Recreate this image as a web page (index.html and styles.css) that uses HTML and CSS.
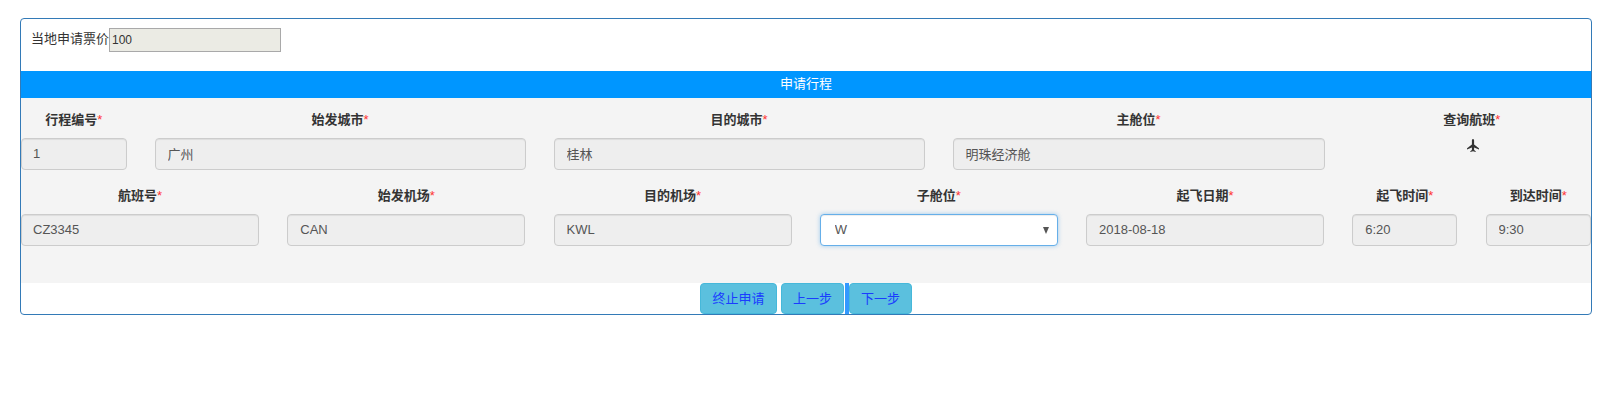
FILE: index.html
```html
<!DOCTYPE html>
<html lang="zh-CN">

<head>
  <meta charset="UTF-8">
  <title>申请行程</title>
  <link rel="stylesheet" href="styles.css">
</head>

<body>
  <main class="panel">
    <div class="price">
      <span class="price__label">当地申请票价</span>
      <input type="text" class="price__input" value="100" readonly>
    </div>

    <h2 class="panel__title">申请行程</h2>

    <div class="trip">
      <div class="trip__row trip__row_top">
        <div class="field">
          <label class="field__label">行程编号<span class="field__star">*</span></label>
          <input type="text" class="field__input field__input_tight" value="1" readonly>
        </div>
        <div class="field">
          <label class="field__label">始发城市<span class="field__star">*</span></label>
          <input type="text" class="field__input" value="广州" readonly>
        </div>
        <div class="field">
          <label class="field__label">目的城市<span class="field__star">*</span></label>
          <input type="text" class="field__input" value="桂林" readonly>
        </div>
        <div class="field">
          <label class="field__label">主舱位<span class="field__star">*</span></label>
          <input type="text" class="field__input" value="明珠经济舱" readonly>
        </div>
        <div class="field">
          <label class="field__label">查询航班<span class="field__star">*</span></label>
          <svg class="field__icon" width="12" height="13" viewBox="0 0 12 13">
            <path fill="#333" d="M6 0C6.800 0 7.100.8 7.100 1.800V5.400L11.600 9c.3.2.4.5.4.8v.7L7.100 8.500v2.400l1.600 1.300V13L6 12.200 3.300 13v-.8l1.600-1.300V8.500L0 10.500v-.7c0-.3.1-.6.4-.8l4.500-3.600V1.800C4.900.8 5.200 0 6 0z" />
          </svg>
        </div>
      </div>

      <div class="trip__row trip__row_bottom">
        <div class="field">
          <label class="field__label">航班号<span class="field__star">*</span></label>
          <input type="text" class="field__input field__input_tight" value="CZ3345" readonly>
        </div>
        <div class="field">
          <label class="field__label">始发机场<span class="field__star">*</span></label>
          <input type="text" class="field__input" value="CAN" readonly>
        </div>
        <div class="field">
          <label class="field__label">目的机场<span class="field__star">*</span></label>
          <input type="text" class="field__input" value="KWL" readonly>
        </div>
        <div class="field">
          <label class="field__label">子舱位<span class="field__star">*</span></label>
          <div class="select">
            <select class="select__control">
              <option>W</option>
            </select>
          </div>
        </div>
        <div class="field">
          <label class="field__label">起飞日期<span class="field__star">*</span></label>
          <input type="text" class="field__input" value="2018-08-18" readonly>
        </div>
        <div class="field">
          <label class="field__label">起飞时间<span class="field__star">*</span></label>
          <input type="text" class="field__input" value="6:20" readonly>
        </div>
        <div class="field">
          <label class="field__label">到达时间<span class="field__star">*</span></label>
          <input type="text" class="field__input" value="9:30" readonly>
        </div>
      </div>
    </div>

    <div class="actions">
      <button class="actions__btn actions__btn_stop">终止申请</button>
      <button class="actions__btn">上一步</button>
      <span class="actions__divider"></span>
      <button class="actions__btn">下一步</button>
    </div>
  </main>
</body>

</html>
```

FILE: styles.css
```css
html,
body {
  margin: 0;
  background-color: #fff;
  font-family: "Liberation Sans", "Noto Sans CJK SC", sans-serif;
  font-size: 13px;
  color: #333;
}

input,
select,
button {
  font-family: inherit;
  font-size: 13px;
  box-sizing: border-box;
}

.panel {
  box-sizing: border-box;
  width: 1572px;
  height: 297px;
  margin: 18px 0 0 20px;
  border: 1px solid #337ab7;
  border-radius: 4px;
  overflow: hidden;
}

.price {
  display: flex;
  height: 52px;
  padding: 9px 0 0 10px;
  box-sizing: border-box;
}

.price__label {
  width: 78px;
  line-height: 22px;
}

.price__input {
  width: 172px;
  height: 24px;
  padding: 1px 2px;
  border: 1px solid #a9a9a9;
  background-color: #ebebe4;
  color: #333;
  font-size: 12px;
  outline: none;
}

.panel__title {
  height: 27px;
  margin: 0;
  background-color: #0096ff;
  color: #fff;
  font-size: 13px;
  font-weight: normal;
  line-height: 26px;
  text-align: center;
}

.trip {
  height: 185px;
  padding-top: 12px;
  box-sizing: border-box;
  background-color: #f4f4f4;
}

.trip__row {
  display: grid;
}

.trip__row_top {
  grid-template-columns: 105.5px 371px 371px 372px 1fr;
  column-gap: 28px;
}

.trip__row_bottom {
  grid-template-columns: repeat(5, 238px) 105px 1fr;
  column-gap: 28.25px;
  margin-top: 16px;
}

.field {
  display: flex;
  flex-direction: column;
  align-items: center;
  min-width: 0;
}

.field__label {
  margin-bottom: 8px;
  font-weight: bold;
  line-height: 20px;
  white-space: nowrap;
}

.field__star {
  color: #f33;
  font-weight: normal;
}

.field__input {
  width: 100%;
  height: 32px;
  padding: 0 12px 2px;
  border: 1px solid #ccc;
  border-radius: 4px;
  background-color: #eee;
  color: #555;
  box-shadow: inset 0 1px 1px rgba(0, 0, 0, 0.075);
  outline: none;
}

.field__input_tight {
  padding-left: 11px;
}

.field__icon {
  display: block;
  margin: 1px 0 0 2px;
}

.select {
  position: relative;
  width: 100%;
}

.select::after {
  content: "";
  position: absolute;
  top: 13px;
  right: 9px;
  border-style: solid;
  border-width: 7px 3.5px 0;
  border-color: #555 transparent transparent;
}

.select__control {
  display: block;
  width: 100%;
  height: 32px;
  padding: 0 10px 2px 14px;
  border: 1px solid #66afe9;
  border-radius: 4px;
  background-color: #fff;
  color: #555;
  box-shadow: inset 0 1px 1px rgba(0, 0, 0, 0.075), 0 0 4px rgba(102, 175, 233, 0.6);
  outline: none;
  appearance: none;
}

.actions {
  display: flex;
  justify-content: center;
  height: 31px;
}

.actions__btn {
  height: 31px;
  padding: 0 11px 3px;
  border: 1px solid #46b8da;
  border-radius: 4px;
  background-color: #5bc0de;
  color: #1a3cff;
}

.actions__btn_stop {
  width: 77px;
  margin-right: 4px;
}

.actions__divider {
  width: 4px;
  margin-left: 1px;
  background-color: #3399ff;
}
```
